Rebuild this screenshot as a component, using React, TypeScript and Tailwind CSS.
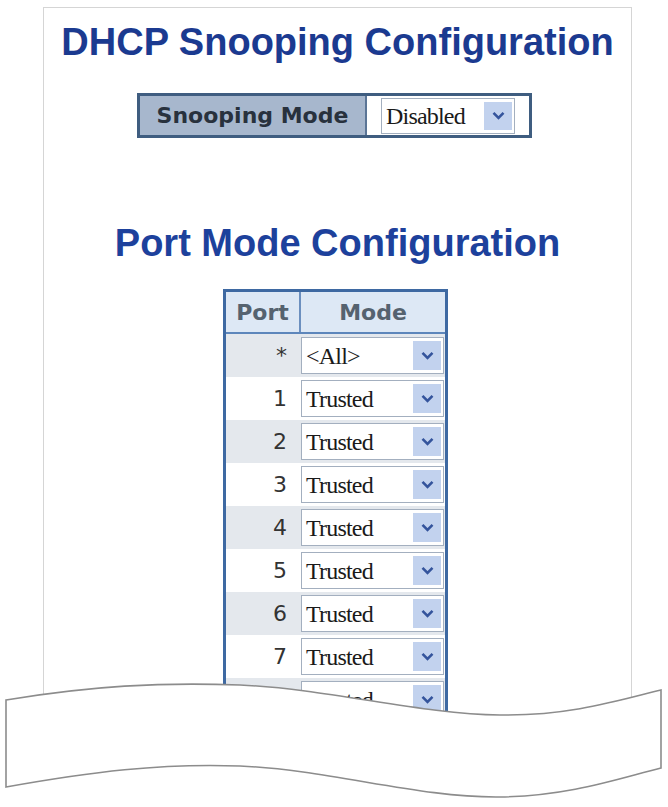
const ports = ['1', '2', '3', '4', '5', '6', '7', '8'];

function Chevron() {
  return (
    <svg width="13" height="9" viewBox="0 0 13 9" className="block">
      <path d="M1.5 1.8 L6.5 6.8 L11.5 1.8" fill="none" stroke="#34549c" strokeWidth="2.6" />
    </svg>
  );
}

function SelectBox({ value, className = '' }: { value: string; className?: string }) {
  return (
    <div className={`flex items-center border border-[#a3afbf] bg-white ${className}`}>
      <span className="flex-1 pl-[4px] font-['Liberation_Serif',serif] text-[24px] leading-none tracking-[-0.8px] text-[#1a1a1a]">
        {value}
      </span>
      <div className="mr-[2px] flex h-[calc(100%-6px)] w-[28px] items-center justify-center bg-[#c2d2ee]">
        <Chevron />
      </div>
    </div>
  );
}

function SnoopingMode() {
  return (
    <div className="mr-[6px] mt-[29px] flex h-[45px] w-[395px] border-[3px] border-[#3f5d80] bg-white">
      <div className="flex w-[227px] items-center justify-center border-r-[2px] border-[#5b7596] bg-[#a7b7cd] font-['DejaVu_Sans',sans-serif] text-[22px] font-bold text-[#28313d]">
        Snooping Mode
      </div>
      <div className="flex flex-1 items-center pl-[14px]">
        <SelectBox value="Disabled" className="h-[36px] w-[134px]" />
      </div>
    </div>
  );
}

function PortRow({ port, value, shaded }: { port: string; value: string; shaded: boolean }) {
  return (
    <div className={`flex h-[43px] items-center ${shaded ? 'bg-[#e4e8ed]' : 'bg-white'}`}>
      <div className="w-[75px] pr-[14px] text-right font-['DejaVu_Sans',sans-serif] text-[22px] text-[#333]">{port}</div>
      <SelectBox value={value} className="h-[37px] w-[143px]" />
    </div>
  );
}

function PortTable() {
  return (
    <div className="mr-[4px] mt-[24px] w-[225px] border-x-[3px] border-t-[3px] border-[#3e69a2]">
      <div className="flex h-[42px] border-b-[2px] border-[#5d86bb] bg-[#dde8f5] font-['DejaVu_Sans',sans-serif] text-[22px] font-bold text-[#55626f]">
        <div className="flex w-[75px] items-center justify-center border-r-[2px] border-[#6b8fbf]">Port</div>
        <div className="flex flex-1 items-center justify-center">Mode</div>
      </div>
      <PortRow port="*" value="<All>" shaded />
      {ports.map((p, i) => (
        <PortRow key={p} port={p} value="Trusted" shaded={i % 2 === 1} />
      ))}
    </div>
  );
}

// torn paper edge drawn over the bottom of the page
function TornEdge() {
  return (
    <svg className="absolute left-0 top-[670px]" width="668" height="137" viewBox="0 670 668 137">
      <path
        d="M6 700 C 90 686, 160 682, 240 685 C 330 689, 420 714, 500 715 C 570 716, 620 700, 661 690
           L 661 768 C 620 778, 570 796, 500 797 C 420 798, 330 770, 240 766 C 160 763, 90 772, 6 787 Z"
        fill="#fff"
        stroke="#8c8c8c"
        strokeWidth="1.6"
      />
    </svg>
  );
}

export default function App() {
  return (
    <div className="relative h-[807px] w-[668px] overflow-hidden bg-white">
      <div className="ml-[43px] mt-[7px] flex h-[740px] w-[589px] flex-col items-center overflow-hidden border border-[#d5d5d5] font-['Liberation_Sans',Arial,sans-serif]">
        <h1 className="mt-[12px] text-[38px] font-bold leading-[44px] text-[#1b3a90]">DHCP Snooping Configuration</h1>
        <SnoopingMode />
        <h2 className="mt-[83px] text-[38px] font-bold leading-[44px] text-[#1d419c]">Port Mode Configuration</h2>
        <PortTable />
      </div>
      <TornEdge />
    </div>
  );
}
